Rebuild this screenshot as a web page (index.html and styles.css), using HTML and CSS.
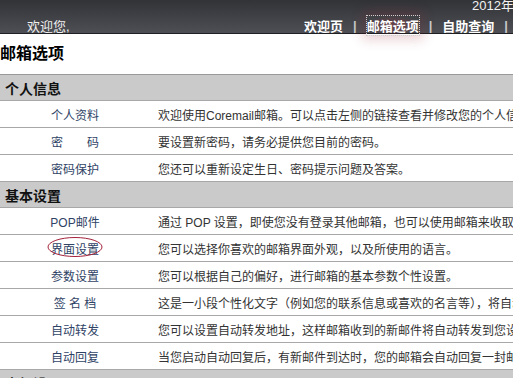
FILE: index.html
```html
<!DOCTYPE html>
<html lang="zh-CN">

<head>
    <meta charset="UTF-8">
    <meta name="viewport" content="width=device-width, initial-scale=1.0">
    <title>邮箱选项</title>
    <link rel="stylesheet" href="styles.css">
</head>

<body>
    <!-- 顶部导航 -->
    <div class="topbar">
        <div class="date">2012年</div>
        <div class="topbar-row">
            <span class="welcome">欢迎您,</span>
            <div class="nav">
                <a href="#">欢迎页</a>
                <span class="sep">|</span>
                <a href="#" class="current">邮箱选项</a>
                <span class="sep">|</span>
                <a href="#">自助查询</a>
                <span class="sep">|</span>
            </div>
        </div>
    </div>

    <h1 class="page-title">邮箱选项</h1>

    <div class="options-wrap">
        <table class="options">
            <colgroup>
                <col class="col-label">
                <col>
            </colgroup>
            <tr class="group">
                <td colspan="2">个人信息</td>
            </tr>
            <tr>
                <td class="label"><a href="#">个人资料</a></td>
                <td class="desc">欢迎使用Coremail邮箱。可以点击左侧的链接查看并修改您的个人信息。</td>
            </tr>
            <tr>
                <td class="label"><a href="#">密&emsp;&emsp;码</a></td>
                <td class="desc">要设置新密码，请务必提供您目前的密码。</td>
            </tr>
            <tr>
                <td class="label"><a href="#">密码保护</a></td>
                <td class="desc">您还可以重新设定生日、密码提示问题及答案。</td>
            </tr>

            <tr class="group">
                <td colspan="2">基本设置</td>
            </tr>
            <tr>
                <td class="label"><a href="#">POP邮件</a></td>
                <td class="desc">通过 POP 设置，即使您没有登录其他邮箱，也可以使用邮箱来收取其他邮箱的邮件。</td>
            </tr>
            <tr>
                <td class="label">
                    <span class="marked">
                        <a href="#">界面设置</a>
                        <svg class="circle" width="58" height="22" viewBox="0 0 58 22">
                            <ellipse cx="29" cy="11" rx="27" ry="9.5" fill="none" stroke="#a3213a" stroke-width="1"/>
                        </svg>
                    </span>
                </td>
                <td class="desc">您可以选择你喜欢的邮箱界面外观，以及所使用的语言。</td>
            </tr>
            <tr>
                <td class="label"><a href="#">参数设置</a></td>
                <td class="desc">您可以根据自己的偏好，进行邮箱的基本参数个性设置。</td>
            </tr>
            <tr>
                <td class="label"><a href="#">签 名 档</a></td>
                <td class="desc">这是一小段个性化文字（例如您的联系信息或喜欢的名言等），将自动附加在邮件末尾。</td>
            </tr>
            <tr>
                <td class="label"><a href="#">自动转发</a></td>
                <td class="desc">您可以设置自动转发地址，这样邮箱收到的新邮件将自动转发到您设置的地址。</td>
            </tr>
            <tr>
                <td class="label"><a href="#">自动回复</a></td>
                <td class="desc">当您启动自动回复后，有新邮件到达时，您的邮箱会自动回复一封邮件给发件人。</td>
            </tr>

            <tr class="group">
                <td colspan="2">高级设置</td>
            </tr>
        </table>
    </div>
</body>

</html>
```

FILE: styles.css
```css
html,
body {
    margin: 0;
    padding: 0;
    overflow: hidden;
}

body {
    font-family: "Liberation Sans", "Noto Sans CJK SC", sans-serif;
    font-size: 12px;
    color: #333;
    background: #fff;
}

a {
    text-decoration: none;
}

/* 顶部 */
.topbar {
    height: 34px;
    background: linear-gradient(#313337, #4d4f54);
    border-bottom: 1px solid #1e1f22;
    box-sizing: border-box;
    color: #fff;
}

.date {
    text-align: right;
    font-size: 13px;
    line-height: 12px;
    height: 12px;
    margin-right: -1px;
    color: #f2f2f2;
}

.topbar-row {
    display: flex;
    justify-content: space-between;
    align-items: center;
    height: 20px;
    padding-top: 3px;
}

.welcome {
    padding-left: 27px;
    font-size: 13px;
    color: #f0f0f0;
}

.nav {
    display: flex;
    align-items: center;
    gap: 10px;
    padding-right: 5px;
}

.nav a {
    color: #fff;
    font-weight: bold;
    font-size: 13px;
}

.nav .current {
    outline: 1px dotted #cfcfcf;
    background: radial-gradient(ellipse at center, rgba(190, 50, 70, 0.3) 0%, rgba(190, 50, 70, 0.12) 55%, rgba(190, 50, 70, 0) 75%);
    box-shadow: 0 0 12px 5px rgba(150, 40, 55, 0.2);
}

.nav .sep {
    color: #c8c8c8;
    font-weight: bold;
    font-size: 13px;
}

/* 标题 */
.page-title {
    margin: 0;
    padding: 8px 0 0;
    height: 32px;
    line-height: 20px;
    font-size: 16px;
    font-weight: bold;
    color: #000;
    font-family: "Noto Sans CJK SC", serif;
}

/* 选项表格 */
.options-wrap {
    width: 513px;
    overflow: hidden;
}

.options {
    width: 860px;
    table-layout: fixed;
    border-collapse: collapse;
    white-space: nowrap;
}

.col-label {
    width: 150px;
}

.options td {
    height: 26px;
    padding: 0;
    border-bottom: 1px solid #a8a8a8;
    overflow: hidden;
}

.group td {
    background: #cacaca;
    border-top: 1px solid #999;
    font-weight: bold;
    font-size: 14px;
    color: #111;
    padding-left: 5px;
    height: 25px;
}

.label {
    text-align: center;
}

.label a {
    color: #2f4366;
}

.desc {
    padding-left: 8px !important;
    color: #333;
}

.marked {
    position: relative;
    display: inline-block;
}

.circle {
    position: absolute;
    left: -5px;
    top: -4px;
}
```
